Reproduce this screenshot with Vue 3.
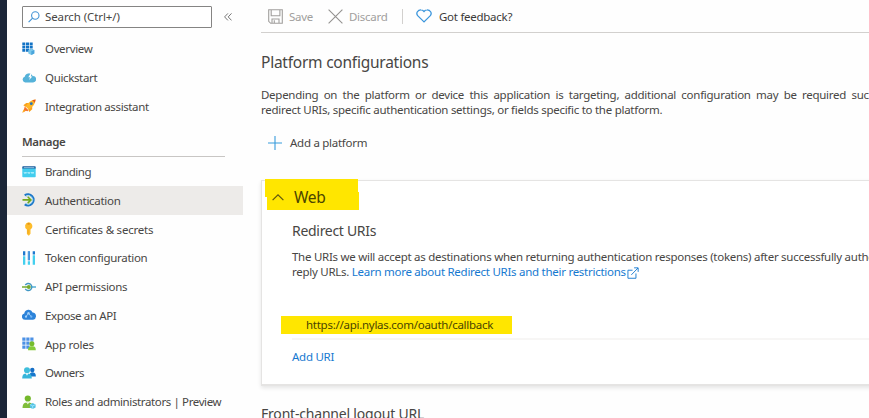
<script setup>
const topItems = [
  { icon: 'overview', label: 'Overview' },
  { icon: 'quickstart', label: 'Quickstart' },
  { icon: 'rocket', label: 'Integration assistant' }
]
const manageItems = [
  { icon: 'branding', label: 'Branding' },
  { icon: 'auth', label: 'Authentication', active: true },
  { icon: 'key', label: 'Certificates & secrets' },
  { icon: 'token', label: 'Token configuration' },
  { icon: 'permissions', label: 'API permissions' },
  { icon: 'expose', label: 'Expose an API' },
  { icon: 'roles', label: 'App roles' },
  { icon: 'owners', label: 'Owners' },
  { icon: 'admins', label: 'Roles and administrators | Preview' }
]
</script>

<template>
  <div class="page">
    <svg class="defs" width="0" height="0" aria-hidden="true">
      <defs>
        <symbol id="overview" viewBox="0 0 14 14">
          <path fill="#1273c5" d="M.3.5h3v2.700h-3zM4 .5h3v2.700H4zM7.700.5h3v2.700h-3zM.3 3.800h3v2.700h-3zM4 3.800h3v2.700H4zM7.700 3.800h3v2.700h-3zM.3 7.100h3v2.700h-3zM4 7.100h3v2.700H4zM7.700 7.100h3v2.700h-3z" />
          <path fill="#7ac7ea" d="M9.300 6.700l3 1.300v3.600l-3 1.300-3-1.300V8z" />
          <path fill="#4aa5dc" d="M9.300 9.300l3-1.300v3.600l-3 1.300z" />
        </symbol>
        <symbol id="quickstart" viewBox="0 0 14 14">
          <path fill="#55b2d9" d="M3.100 11.500A3 3 0 0 1 2.700 5.700 4.200 4.200 0 0 1 10.700 5a3.200 3.200 0 0 1 .4 6.500z" />
          <path fill="#fff" d="M8.500 2.500L6.300 6.300h1.800L7.100 9l3.300-3.600H8.700L9.700 2.500z" />
        </symbol>
        <symbol id="rocket" viewBox="0 0 14 14">
          <path fill="#f9a11b" d="M1.300 6.300L4.300 4h3L4 8zM6.200 10l4-3.300v3.500L7.200 13z" />
          <path fill="#f6742a" d="M2.700 7.600l3.800 3.600-1 1.100-1.700-.6-3.300 2L2 10.200z" />
          <path fill="#ffb629" d="M13.600.4C9.500.6 6.300 3.200 3.600 7.500l3 2.900C11 7.900 13.400 4.600 13.600.4zM.3 13.600l1.200-3 1.700 1.600z" />
          <path fill="#e65625" d="M13.600.4l-3.300.8 2.500 2.500z" />
          <circle cx="9.300" cy="4.700" r="1.400" fill="#2476bb" />
        </symbol>
        <symbol id="branding" viewBox="0 0 14 14">
          <path fill="#42cdee" d="M.3 3h13.400v8.600q0 .7-.7.7H1q-.7 0-.7-.7z" />
          <path fill="#17599b" d="M1 1.300h12q.7 0 .7.700v1.500H.3V2q0-.7.700-.7z" />
          <path fill="#c2e6f5" d="M1.700 2.400h10.600v.7H1.700z" />
          <path fill="none" stroke="#c9f6ff" stroke-width=".7" d="M2 7l.7 1.500.6-1.300.6 1.300.6-1.500M5.700 7l.6 1.500.6-1.300.6 1.300.6-1.500M9.300 7l.6 1.500.6-1.300.6 1.300.6-1.500" />
        </symbol>
        <symbol id="auth" viewBox="0 0 14 14">
          <path fill="none" stroke="#1c78ca" stroke-width="2" d="M2.700 2.400A5.600 5.600 0 1 1 2.700 11.400" />
          <path fill="none" stroke="#8fd0ea" stroke-width=".8" d="M3.800 3.700A4.200 4.200 0 1 1 3.800 10.100" />
          <path fill="none" stroke="#72a81d" stroke-width="1.600" d="M.5 6.900h8M5.700 3.700l3.200 3.200-3.200 3.200" />
        </symbol>
        <symbol id="key" viewBox="0 0 14 14">
          <path fill="#fdbc2b" d="M6.500.2a3.900 3.900 0 0 1 2 7.200v4.400l-1.700 2-1.900-1.900V7.400A3.900 3.900 0 0 1 6.500.2z" />
          <path fill="#d68511" d="M5.500 1.300h2.200v1.200H5.500z" /><path fill="#e89d1d" d="M5.700 7.500h.7v4h-.7z" />
        </symbol>
        <symbol id="token" viewBox="0 0 14 14">
          <path fill="#1d78cf" d="M1 .3h2.300v4.200H1zM5.800.3H8v9H5.800zM10.700.3H13v3.200h-2.300z" />
          <path fill="#44d0ef" d="M1 5.300h2.300v8.500H1zM5.800 10.200H8v3.600H5.800zM10.700 4.300H13v9.500h-2.300z" />
          <path fill="#65abe8" d="M6.300 .3h1.200v9H6.300z" />
        </symbol>
        <symbol id="permissions" viewBox="0 0 14 14">
          <path stroke="#36a3cf" stroke-width="1.300" d="M10 7h4" />
          <path d="M3.300 5.200a3.500 3.500 0 1 1 0 3.600" fill="none" stroke="#4097c4" stroke-width="1.400" />
          <path d="M0 7h6" stroke="#75aa30" stroke-width="1.500" />
          <circle cx="6.800" cy="7" r="2" fill="#75aa30" />
        </symbol>
        <symbol id="expose" viewBox="0 0 14 14">
          <path fill="#2c83d9" d="M3 11.800A3.200 3.200 0 0 1 2.300 5.500 4.300 4.300 0 0 1 10.600 4.500a3.700 3.700 0 0 1 .5 7.300z" />
          <path d="M4 8.600l2.500-3.300 2.800 3.400" fill="none" stroke="#abd5ff" stroke-width=".8" />
          <circle cx="6.500" cy="5.200" r="1.200" fill="#a4cff7" /><circle cx="4" cy="8.700" r="1.100" fill="#a2d1fc" /><circle cx="9.300" cy="8.700" r="1.100" fill="#74b7f7" />
        </symbol>
        <symbol id="roles" viewBox="0 0 14 14">
          <path fill="#4c91e5" d="M.3.500h3.200v3.200H.3zM4.300.500h3.200v3.200H4.300zM8.300.500h3.200v3.200H8.300zM.3 4.500h3.200v3.200H.3zM4.300 4.500h3.200v3.200H4.300zM8.300 4.500h3.200v3.200H8.300zM.3 8.500h3.200v3.200H.3zM4.300 8.500h3.200v3.200H4.300z" />
          <circle cx="9.900" cy="6.800" r="2.500" fill="#76bc2d" /><path fill="#86cb3b" d="M6 13.300q0-4 2.800-4h2.200q2.800 0 2.800 4z" />
        </symbol>
        <symbol id="owners" viewBox="0 0 14 14">
          <circle cx="10.300" cy="4" r="2.200" fill="#156fc6" /><path fill="#1677cc" d="M7.500 10.500q0-4.200 2.800-4.200 3.500 0 3.600 4.200z" />
          <circle cx="5" cy="4.200" r="3" fill="#3fbedc" /><path fill="#35b5da" d="M.2 12.400q0-4.800 3.300-5l1.500 1.500 1.500-1.500q3.300.2 3.300 5z" /><path fill="#d9faff" d="M4.300 7.400h1.400L5 10z" />
        </symbol>
        <symbol id="admins" viewBox="0 0 14 14">
          <circle cx="5.800" cy="3.500" r="3.100" fill="#74b82b" /><path fill="#80bd3a" d="M.5 13q0-5.200 3.700-5.500l1.600 1.600 1.500-1.600q3.700.3 3.700 5.500z" />
          <path fill="#d9efbd" d="M5 7.300h1.600l-.8 2.500z" /><path fill="#53c2e4" d="M10.700 8l2.900 1.500v3L10.700 14l-2.800-1.500v-3z" /><path d="M7.900 9.500l2.800 1.400 2.900-1.400M10.700 11v3" fill="none" stroke="#b9efff" stroke-width=".7" />
        </symbol>
      </defs>
    </svg>

    <div class="rail"></div>
    <aside class="sidebar">
      <div class="search-row">
        <div class="search">
          <svg width="12" height="12" viewBox="0 0 12 12" fill="none" stroke="#4293d4" stroke-width="1.100"><circle cx="7.300" cy="4.500" r="3.700" /><path d="M4.600 7.200L.6 11.200" /></svg>
          <span>Search (Ctrl+/)</span>
        </div>
        <svg class="collapse" width="8" height="8" viewBox="0 0 8 8" fill="none" stroke="#666" stroke-width=".9"><path d="M3.900.4L.6 3.900l3.300 3.500M7.500.4L4.200 3.900l3.300 3.500" /></svg>
      </div>
      <nav class="menu">
        <a v-for="item in topItems" :key="item.icon" class="item">
          <svg width="14" height="14"><use :href="'#' + item.icon" /></svg><span :class="'label-' + item.icon">{{ item.label }}</span>
        </a>
      </nav>
      <h3 class="group">Manage</h3>
      <nav class="menu manage">
        <a v-for="item in manageItems" :key="item.icon" class="item" :class="{ active: item.active }">
          <svg width="14" height="14"><use :href="'#' + item.icon" /></svg><span :class="'label-' + item.icon">{{ item.label }}</span>
        </a>
      </nav>
    </aside>

    <main class="content">
      <div class="toolbar">
        <button class="command disabled save">
          <svg width="15" height="15" viewBox="0 0 15 15" fill="none" stroke="#a19f9d" stroke-width="1.100"><path d="M.7.700h13.600v13.600H2.700l-2-2zM3.200.700v6h8.700v-6M4 14.200V10h7v4.200M6.300 11.200v3" /></svg>
          <span>Save</span>
        </button>
        <button class="command disabled discard">
          <svg width="15" height="15" viewBox="0 0 15 15" fill="none" stroke="#949290" stroke-width="1.100"><path d="M.6.600l13.800 13.800M14.400.600L.6 14.400" /></svg>
          <span>Discard</span>
        </button>
        <i class="divider"></i>
        <button class="command feedback">
          <svg width="16" height="14" viewBox="0 0 16 14" fill="none" stroke="#3c96dc" stroke-width="1.300"><path d="M8 12.900L1.900 6.900C-.7 4.100 2.100.700 5 .8c1.500 0 2.300.8 3 1.700C8.700 1.600 9.500.8 11 .8c2.900-.1 5.700 3.300 3.100 6.100z" /></svg>
          <span>Got feedback?</span>
        </button>
      </div>

      <h2 class="title">Platform configurations</h2>
      <p class="intro"><span class="intro-first">Depending on the platform or device this application is targeting, additional configuration may be required such as</span><br><span>redirect URIs, specific authentication settings, or fields specific to the platform.</span></p>
      <button class="add-platform">
        <svg width="14" height="14" viewBox="0 0 14 14" stroke="#379bdb" stroke-width="1.100"><path d="M7 0v14M0 7h14" /></svg>
        <span>Add a platform</span>
      </button>

      <section class="card">
        <header class="card-head">
          <svg width="12" height="7" viewBox="0 0 12 7" fill="none" stroke="#5e5610" stroke-width="1.200"><path d="M.6 6.100L6 .9l5.400 5.200" /></svg>
          <h3>Web</h3>
        </header>
        <div class="card-body">
          <h4>Redirect URIs</h4>
          <p class="description"><span>The URIs we will accept as destinations when returning authentication responses (tokens) after successfully authenticating users.</span><br><span>reply URLs. <a>Learn more about Redirect URIs and their restrictions</a></span><svg class="external" width="12" height="12" viewBox="0 0 13 13" fill="none" stroke="#1679d0" stroke-width="1"><path d="M6 3.500H1v8.700h8.700V7M4.700 8.500L11.900 1.100M7.700.900h4.400v4.400" /></svg></p>
          <div class="uri-row"><span class="uri">https://api.nylas.com/oauth/callback</span></div>
          <a class="add-uri">Add URI</a>
        </div>
      </section>
      <h2 class="logout">Front-channel logout URL</h2>
    </main>
  </div>
</template>

<style>
body { margin: 0; overflow: hidden; background: #fff; }
</style>
<style scoped>
* { box-sizing: border-box; }
.page { display: flex; width: 869px; height: 418px; overflow: hidden; background: #fefefe; color: #484644; font: 11.5px/16px "Noto Sans", "Open Sans", sans-serif; letter-spacing: -.27px; white-space: nowrap; }
.defs { position: absolute; }
h2, h3, h4, p { margin: 0; font-weight: 400; }
svg { flex: none; }
button { display: flex; align-items: center; padding: 0; border: 0; background: none; color: inherit; font: inherit; letter-spacing: inherit; }
.rail { flex: none; width: 7px; background: #1b2638; }
.sidebar { flex: none; width: 236px; }
.search-row { display: flex; align-items: center; height: 34px; padding: 0 0 1px 15px; }
.search { display: flex; align-items: center; gap: 5px; width: 189.500px; height: 22px; padding-left: 5px; border: 1px solid #858483; border-radius: 1px; background: #fff; letter-spacing: -.1px; }
.collapse { margin-left: 12.500px; }
.menu { padding-top: .5px; }
.item { display: flex; align-items: center; gap: 9px; height: 28.75px; padding-left: 15px; color: inherit; }
.item span { padding-top: .8px; }
.item.active { background: #edebe9; }
.label-overview, .label-quickstart { letter-spacing: -.35px; }
.label-rocket, .label-expose, .label-admins { letter-spacing: -.38px; }
.label-branding, .label-owners { letter-spacing: -.46px; }
.label-auth { letter-spacing: -.29px; }
.label-key, .label-roles { letter-spacing: -.23px; }
.label-token, .label-permissions { letter-spacing: -.3px; }
.group { height: 36px; margin: 0 18px 0 15px; padding-top: 12.200px; border-bottom: 1px solid #c8c6c4; font-size: 11.5px; line-height: 18px; font-weight: 600; letter-spacing: -.33px; }
.manage { padding-top: .5px; }
.content { flex: none; width: 700px; padding-left: 18px; }
.toolbar { display: flex; align-items: center; height: 33px; padding-left: 7px; border-bottom: 1px solid #d2d0ce; }
.command { gap: 6px; }
.command span { padding-top: 1px; }
.save { width: 46px; }
.disabled { color: #a19f9d; }
.discard { width: 60px; margin-left: 14px; }
.divider { width: 1px; height: 15px; margin: 0 13px 0 14px; background: #d2d0ce; }
.feedback { gap: 7px; color: #3b3a39; }
.title { padding-top: 18px; font-size: 15.5px; line-height: 23px; letter-spacing: -.24px; }
.intro { padding-top: 12.500px; line-height: 15.300px; }
.intro-first { word-spacing: 2.620px; }
.add-platform { gap: 8px; margin: 17.500px 0 0 7px; height: 16px; }
.card { width: 700px; height: 206px; margin-top: 29.500px; border: 1px solid #e5e4e3; border-bottom-width: 2px; background: #fff; box-shadow: 0 2px 4px #0000001a; }
.card-head { position: relative; display: flex; align-items: center; gap: 10px; height: 33px; padding-left: 10px; color: #4a4400; }
.card-head::before, .card-head::after { position: absolute; content: ''; background: #ffe600; }
.card-head::before { left: 3px; top: -2px; width: 93px; height: 18px; }
.card-head::after { left: 5px; top: 11px; width: 92px; height: 18px; }
.card-head > * { position: relative; z-index: 1; }
.card-head h3 { font-size: 15.5px; line-height: 21px; }
.card-body { padding-left: 30px; }
h4 { padding-top: 6px; font-size: 14px; line-height: 22px; letter-spacing: -.3px; }
.description { padding-top: 7px; line-height: 15.300px; }
a { color: #1679d0; }
.external { margin-left: 1px; vertical-align: -3px; }
.uri-row { display: flex; margin-top: 35.500px; height: 25px; border-bottom: 2px solid #f7f6f5; }
.uri { display: block; width: 231px; height: 18px; margin: 1px 0 0 -11px; padding-left: 25px; background: #ffe600; color: #4a4400; line-height: 17px; }
.add-uri { display: block; padding-top: 9px; }
.logout { padding-top: 17px; font-size: 14px; line-height: 22px; letter-spacing: -.2px; }
</style>
